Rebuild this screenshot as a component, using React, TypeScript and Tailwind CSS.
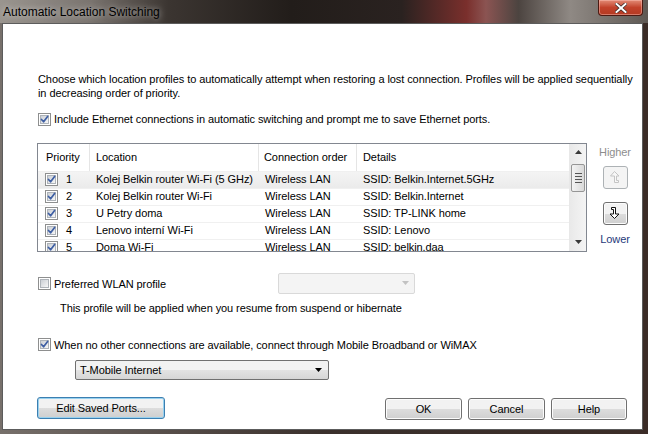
import React from "react";

const rows = [
    { n: 1, location: "Kolej Belkin router Wi-Fi (5 GHz)", order: "Wireless LAN", details: "SSID: Belkin.Internet.5GHz" },
    { n: 2, location: "Kolej Belkin router Wi-Fi", order: "Wireless LAN", details: "SSID: Belkin.Internet" },
    { n: 3, location: "U Petry doma", order: "Wireless LAN", details: "SSID: TP-LINK home" },
    { n: 4, location: "Lenovo interní Wi-Fi", order: "Wireless LAN", details: "SSID: Lenovo" },
    { n: 5, location: "Doma Wi-Fi", order: "Wireless LAN", details: "SSID: belkin.daa" },
];

function CheckBox({ checked }: { checked: boolean }) {
    return (
        <span className="relative inline-flex h-[13px] w-[13px] shrink-0 border border-[#8e8f8f] bg-white">
            <span className="absolute inset-[1px] border border-[#aeb3b9] bg-gradient-to-br from-[#cbcfd5] to-[#f7f7f7]" />
            {checked && (
                <svg viewBox="0 0 11 11" className="absolute inset-0 h-[11px] w-[11px]">
                    <path d="M2.5 5.5 L4.6 7.8 L8.6 2.4" fill="none" stroke="#3d5ea3" strokeWidth="1.7" strokeLinecap="round" strokeLinejoin="round" />
                </svg>
            )}
        </span>
    );
}

function WinButton({ children, width, focused }: { children: React.ReactNode; width: string; focused?: boolean }) {
    return (
        <button
            className={`${width} h-[22px] rounded-[3px] border ${focused ? "border-[#3c7fb1] shadow-[inset_0_0_0_1px_#98d1ef]" : "border-[#707070] shadow-[inset_0_0_0_1px_#fcfcfc]"} bg-gradient-to-b from-[#f2f2f2] from-50% via-[#dddddd] via-50% to-[#cfcfcf] text-[11px] leading-none text-black`}
        >
            {children}
        </button>
    );
}

function ArrowButton({ dir, disabled }: { dir: "up" | "down"; disabled?: boolean }) {
    return (
        <div
            className={`flex h-[23px] w-[25px] items-center justify-center rounded-[3px] border ${disabled ? "border-[#adb2b5] bg-[#f4f4f4]" : "border-[#707070] bg-gradient-to-b from-[#f2f2f2] from-50% via-[#dddddd] via-50% to-[#cfcfcf] shadow-[inset_0_0_0_1px_#fcfcfc]"}`}
        >
            <svg viewBox="0 0 16 16" className="h-[16px] w-[16px]">
                {dir === "up" ? (
                    <path d="M7.5 2.5 L12 7 L9.5 7 L9.5 11.5 L11.5 11.5 L11.5 13.5 L7.5 13.5 L7.5 7 L3.5 7 Z" fill="#f8f8f8" stroke="#c4c4c4" strokeWidth="1" strokeLinejoin="miter" />
                ) : (
                    <path d="M4.5 2.5 L8.5 2.5 L8.5 9 L12 9 L7.5 13.5 L3 9 L6.5 9 L6.5 4.5 L4.5 4.5 Z" fill="#ffffff" stroke="#111111" strokeWidth="1" strokeLinejoin="miter" />
                )}
            </svg>
        </div>
    );
}

function ScrollBar() {
    return (
        <div className="flex w-[17px] flex-col border-l border-[#e8e8e8] bg-gradient-to-r from-[#e9e9e9] to-[#f4f4f4]">
            <div className="flex h-[17px] items-center justify-center">
                <svg viewBox="0 0 7 4" className="h-[4px] w-[7px]">
                    <path d="M0 4 L3.5 0 L7 4 Z" fill="#3a3a3a" />
                </svg>
            </div>
            <div className="mx-[1px] mt-[3px] flex h-[28px] flex-col items-center justify-center gap-[2px] rounded-[2px] border border-[#959595] bg-gradient-to-r from-[#f3f3f3] to-[#d9d9d9]">
                <span className="h-[1px] w-[7px] bg-[#555]" />
                <span className="h-[1px] w-[7px] bg-[#555]" />
                <span className="h-[1px] w-[7px] bg-[#555]" />
                <span className="h-[1px] w-[7px] bg-[#555]" />
            </div>
            <div className="flex-1" />
            <div className="flex h-[17px] items-center justify-center">
                <svg viewBox="0 0 7 4" className="h-[4px] w-[7px]">
                    <path d="M0 0 L7 0 L3.5 4 Z" fill="#3a3a3a" />
                </svg>
            </div>
        </div>
    );
}

function ProfileTable() {
    return (
        <div className="flex h-[109px] w-[550px] overflow-hidden border border-[#828790] bg-white">
            <div className="flex flex-1 flex-col overflow-hidden">
                <div className="flex h-[28px] shrink-0 items-center border-b border-[#f0f0f0]">
                    <div className="w-[52px] border-r border-[#e5e5e5] pl-[8px] leading-[27px]">Priority</div>
                    <div className="w-[169px] border-r border-[#e5e5e5] pl-[6px] leading-[27px]">Location</div>
                    <div className="w-[98px] border-r border-[#e5e5e5] pl-[5px] leading-[27px]">Connection order</div>
                    <div className="pl-[6px]">Details</div>
                </div>
                {rows.map((r) => (
                    <div
                        key={r.n}
                        className={`flex h-[17px] shrink-0 items-center border-b border-[#f0f0f0] ${r.n === 1 ? "bg-gradient-to-b from-[#f4f4f4] to-[#ebebeb]" : ""}`}
                    >
                        <div className="flex w-[52px] items-center pl-[7px]">
                            <CheckBox checked />
                            <span className="ml-[8px]">{r.n}</span>
                        </div>
                        <div className="w-[169px] pl-[6px]">{r.location}</div>
                        <div className="w-[98px] pl-[6px]">{r.order}</div>
                        <div className="pl-[6px]">{r.details}</div>
                    </div>
                ))}
            </div>
            <ScrollBar />
        </div>
    );
}

export default function App() {
    return (
        <div className="flex h-[434px] w-[648px] flex-col overflow-hidden bg-gradient-to-r from-[#77706b] via-[#3a302c] to-[#3b2c27] font-['Liberation_Sans',Arial,sans-serif] text-black">
            {/* title bar */}
            <div className="relative flex h-[23px] shrink-0 items-center bg-[linear-gradient(90deg,#9a958f_0%,#7a746f_14%,#3b3531_26%,#221d1a_45%,#2a2220_62%,#7a2f2c_72%,#8b5452_75%,#4c4440_80%,#8f8984_88%,#5f5954_100%)] pl-[3px]">
                <span className="text-[12px] text-black [text-shadow:0_0_6px_rgba(255,255,255,0.7)]">Automatic Location Switching</span>
                <div className="absolute right-[5px] top-0 flex h-[16px] w-[45px] items-center justify-center rounded-b-[4px] border border-t-0 border-[#4d1a12] bg-gradient-to-b from-[#e28a76] from-0% via-[#c2412b] via-50% to-[#b33a22] shadow-[inset_0_0_0_1px_rgba(255,200,190,0.45)]">
                    <svg viewBox="0 0 12 10" className="h-[10px] w-[12px]">
                        <path d="M1.5 1 L10.5 9 M10.5 1 L1.5 9" stroke="#3a2a28" strokeWidth="3.4" strokeLinecap="square" />
                        <path d="M1.5 1 L10.5 9 M10.5 1 L1.5 9" stroke="#ffffff" strokeWidth="2" strokeLinecap="square" />
                    </svg>
                </div>
            </div>
            {/* body */}
            <div className="flex flex-1 pb-[4px] pl-[2px] pr-[5px]">
                <div className="flex flex-1 flex-col border border-[#5c5c5c] bg-white pl-[35px] text-[11px] tracking-[-0.08px]">
                    <p className="mt-[48px] whitespace-nowrap leading-[14px]">
                        Choose which location profiles to automatically attempt when restoring a lost connection. Profiles will be applied sequentially
                        <br />
                        in decreasing order of priority.
                    </p>
                    <div className="mt-[11px] flex items-center gap-[3px]">
                        <CheckBox checked />
                        <span>Include Ethernet connections in automatic switching and prompt me to save Ethernet ports.</span>
                    </div>

                    <div className="ml-[-1px] mt-[15px] flex">
                        <ProfileTable />
                        <div className="ml-[13px] flex w-[30px] flex-col items-center">
                            <span className="mt-[2px] leading-[14px] text-[#8d8d8d]">Higher</span>
                            <div className="mt-[7px]">
                                <ArrowButton dir="up" disabled />
                            </div>
                            <div className="mt-[13px]">
                                <ArrowButton dir="down" />
                            </div>
                            <span className="mt-[7px] leading-[14px] text-[#1f3a7a]">Lower</span>
                        </div>
                    </div>

                    <div className="mt-[21px] flex items-start">
                        <div className="mt-[3px] flex w-[240px] items-center gap-[3px]">
                            <CheckBox checked={false} />
                            <span>Preferred WLAN profile</span>
                        </div>
                        <div className="flex h-[21px] w-[137px] items-center justify-end rounded-[2px] border border-[#d9d9d9] bg-[#f4f4f4] pr-[5px]">
                            <svg viewBox="0 0 7 4" className="h-[4px] w-[7px]">
                                <path d="M0 0 L7 0 L3.5 4 Z" fill="#c2c2c2" />
                            </svg>
                        </div>
                    </div>
                    <p className="ml-[22px] mt-[7px] leading-[14px]">This profile will be applied when you resume from suspend or hibernate</p>

                    <div className="mt-[22px] flex items-center gap-[3px]">
                        <CheckBox checked />
                        <span>When no other connections are available, connect through Mobile Broadband or WiMAX</span>
                    </div>
                    <div className="ml-[37px] mt-[7px] flex h-[20px] w-[254px] items-center justify-between rounded-[2px] border border-[#707070] bg-gradient-to-b from-[#f2f2f2] from-50% via-[#e3e3e3] via-50% to-[#d6d6d6] pl-[4px] pr-[6px]">
                        <span>T-Mobile Internet</span>
                        <svg viewBox="0 0 7 4" className="h-[4px] w-[7px]">
                            <path d="M0 0 L7 0 L3.5 4 Z" fill="#000" />
                        </svg>
                    </div>

                    <div className="ml-[-1px] mt-[17px] flex items-start">
                        <WinButton width="w-[128px]" focused>
                            Edit Saved Ports...
                        </WinButton>
                        <div className="ml-auto mr-[15px] mt-[1px] flex gap-[6px]">
                            <WinButton width="w-[77px]">OK</WinButton>
                            <WinButton width="w-[77px]">Cancel</WinButton>
                            <WinButton width="w-[76px]">Help</WinButton>
                        </div>
                    </div>
                </div>
            </div>
        </div>
    );
}
